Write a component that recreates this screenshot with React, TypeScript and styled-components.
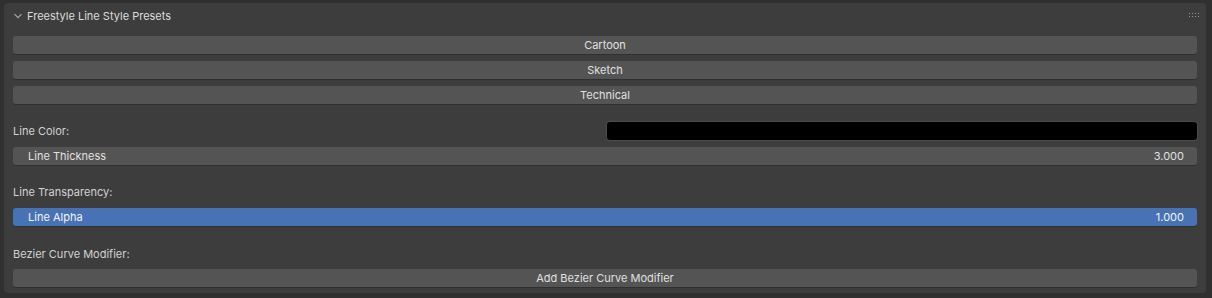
import React from 'react'
import styled, { createGlobalStyle } from 'styled-components'

const GlobalStyle = createGlobalStyle`
  html, body {
    margin: 0;
    padding: 0;
    background: #303030;
    overflow: hidden;
  }
  body {
    font-family: Inter, "DejaVu Sans", sans-serif;
    font-size: 11px;
    color: #e0e0e0;
  }
`

const Page = styled.div`
  width: 1212px;
  height: 298px;
  padding: 3px 6px 5px 4px;
  box-sizing: border-box;
`

const Panel = styled.section`
  height: 100%;
  background: #3d3d3d;
  border-radius: 4px;
  box-sizing: border-box;
  display: flex;
  flex-direction: column;
  overflow: hidden;
`

const Header = styled.header`
  height: 25px;
  flex: none;
  display: flex;
  align-items: center;
  padding: 0 7px 0 9px;
  color: #dcdcdc;
`

const Chevron = styled.svg`
  width: 10px;
  height: 10px;
  margin-right: 4px;
`

const Title = styled.span`
  flex: 1;
`

const Grip = styled.div`
  display: grid;
  grid-template-columns: repeat(4, 1px);
  gap: 2px;
  margin-top: -2px;
  span {
    width: 1px;
    height: 1px;
    background: #9a9a9a;
  }
`

const Body = styled.div`
  display: flex;
  flex-direction: column;
  padding: 8px 9px 0 9px;
`

const Button = styled.button`
  flex: none;
  height: 18px;
  width: 100%;
  border: none;
  border-radius: 3px;
  background: #545454;
  color: #e0e0e0;
  font: inherit;
  padding: 0;
  margin-bottom: 7px;
  box-shadow: 0 1px 0 rgba(0, 0, 0, 0.2);
  &:last-child {
    margin-bottom: 0;
  }
`

const Spacer = styled.div<{ $h: number }>`
  flex: none;
  height: ${(p) => p.$h}px;
`

const Label = styled.div`
  flex: none;
  height: 18px;
  line-height: 18px;
  color: #d2d2d2;
`

const ColorRow = styled.div`
  flex: none;
  display: flex;
  align-items: center;
  height: 18px;
  margin-bottom: 7px;
`

const ColorSwatch = styled.div`
  margin-left: auto;
  width: 590px;
  height: 18px;
  background: #000;
  border-radius: 3px;
  box-shadow: 0 0 0 1px #4a4a4a;
`

const Slider = styled.div<{ $active?: boolean }>`
  flex: none;
  height: 18px;
  border-radius: 3px;
  background: ${(p) => (p.$active ? '#4772b3' : '#545454')};
  color: ${(p) => (p.$active ? '#f4f4f4' : '#e0e0e0')};
  display: flex;
  align-items: center;
  justify-content: space-between;
  padding: 0 13px 0 15px;
  box-shadow: 0 1px 0 rgba(0, 0, 0, 0.2);
`

export default function App() {
  return (
    <>
      <GlobalStyle />
      <Page>
        <Panel>
          <Header>
            <Chevron viewBox="0 0 10 10">
              <path d="M1.5 3.2 L5 6.7 L8.5 3.2" fill="none" stroke="#a8a8a8" strokeWidth="1.2" />
            </Chevron>
            <Title>Freestyle Line Style Presets</Title>
            <Grip>
              {Array.from({ length: 8 }).map((_, i) => (
                <span key={i} />
              ))}
            </Grip>
          </Header>
          <Body>
            <Button>Cartoon</Button>
            <Button>Sketch</Button>
            <Button>Technical</Button>
            <Spacer $h={11} />
            <ColorRow>
              <Label>Line Color:</Label>
              <ColorSwatch />
            </ColorRow>
            <Slider>
              <span>Line Thickness</span>
              <span>3.000</span>
            </Slider>
            <Spacer $h={18} />
            <Label>Line Transparency:</Label>
            <Spacer $h={7} />
            <Slider $active>
              <span>Line Alpha</span>
              <span>1.000</span>
            </Slider>
            <Spacer $h={19} />
            <Label>Bezier Curve Modifier:</Label>
            <Spacer $h={6} />
            <Button>Add Bezier Curve Modifier</Button>
          </Body>
        </Panel>
      </Page>
    </>
  )
}
